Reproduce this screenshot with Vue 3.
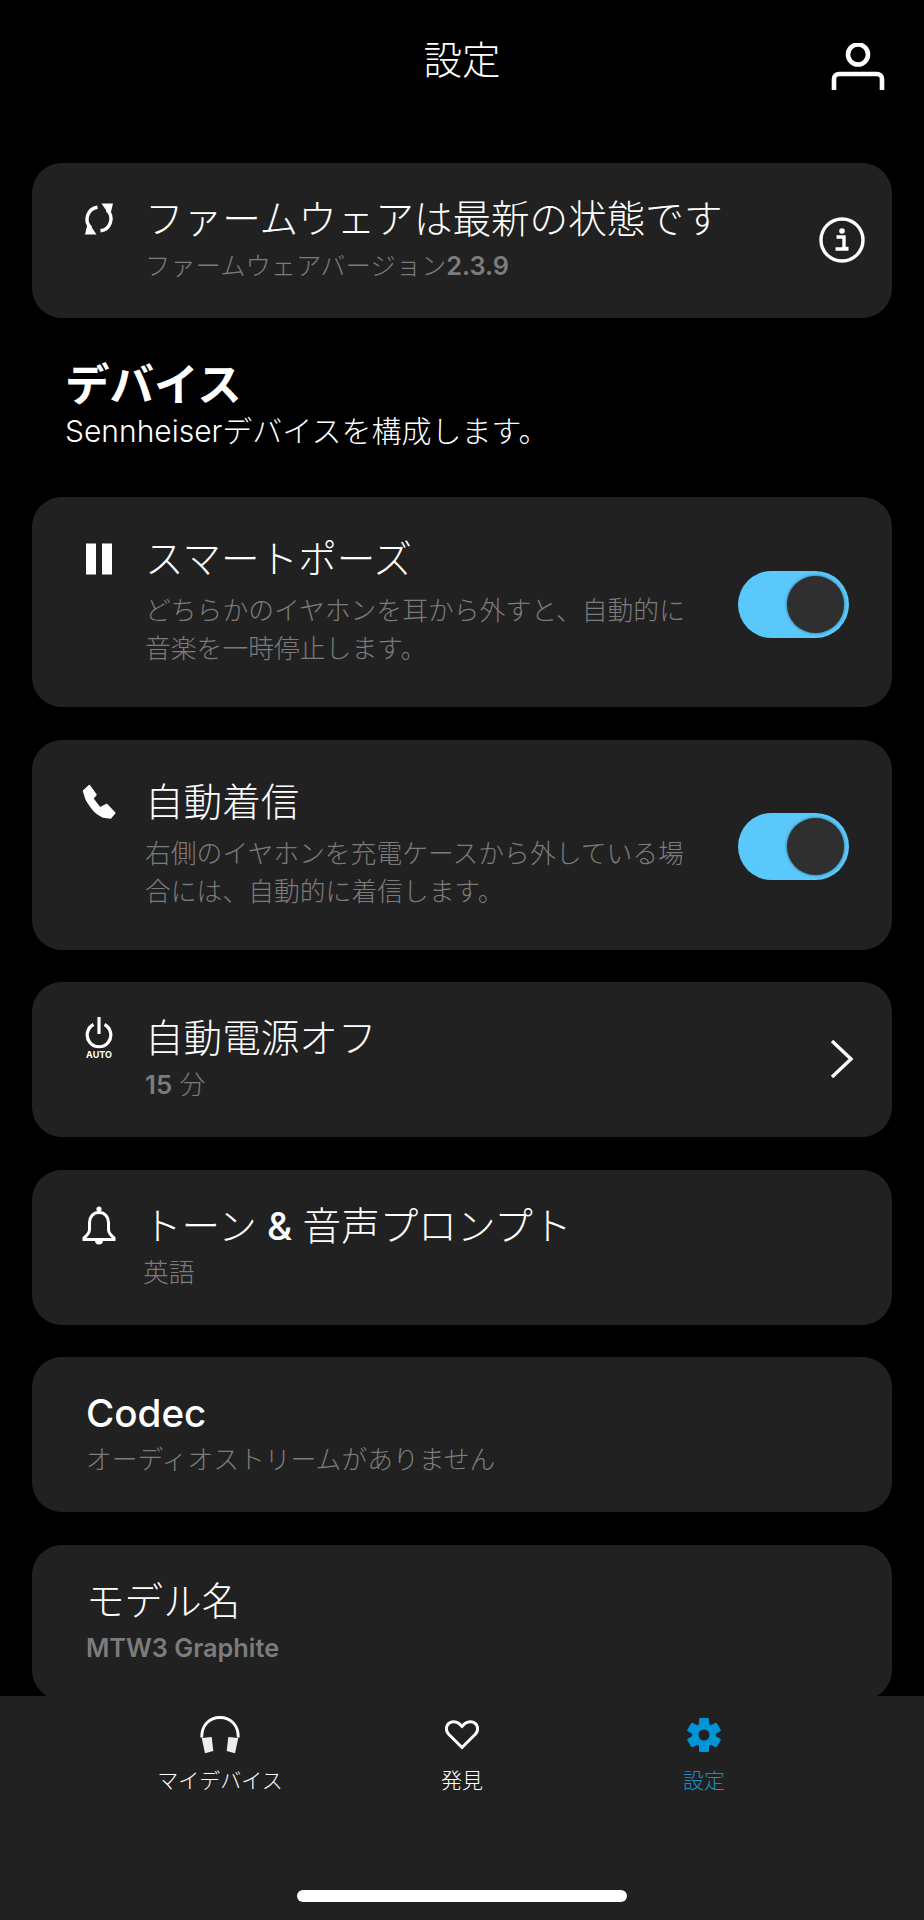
<script setup>
import { ref } from 'vue'

const smartPause = ref(true)
const autoAnswer = ref(true)

const tabs = [
  { id: 'devices', label: 'マイデバイス' },
  { id: 'discover', label: '発見' },
  { id: 'settings', label: '設定' }
]
const activeTab = ref('settings')
</script>

<template>
  <div class="app">
    <main class="content">
      <header class="topbar">
        <span></span>
        <h1 class="topbar__title">設定</h1>
        <button class="topbar__user" aria-label="アカウント">
          <svg width="54" height="48" viewBox="0 0 54 48" fill="none" stroke="#fff" stroke-width="4.6">
            <circle cx="27" cy="11.500" r="10" />
            <path d="M3 47V36a5 5 0 0 1 5-5h38a5 5 0 0 1 5 5v11" />
          </svg>
        </button>
      </header>

      <section class="card">
        <div class="card__icon">
          <svg width="32" height="32" viewBox="0 0 32 32" fill="none" stroke="#fff" stroke-width="3.400">
            <path d="M14.500 4.200A12 12 0 0 0 8 25" />
            <path d="M17.500 27.800A12 12 0 0 0 24 7" />
            <path d="M2 31.500h11.500L5 19Z" fill="#fff" stroke="none" />
            <path d="M30 .5H18.500L27 13Z" fill="#fff" stroke="none" />
          </svg>
        </div>
        <div class="card__body">
          <div class="card__title">ファームウェアは最新の状態です</div>
          <div class="card__sub card__sub--small">ファームウェアバージョン<b>2.3.9</b></div>
        </div>
        <svg class="info" width="46" height="46" viewBox="0 0 46 46" fill="none">
          <circle cx="23" cy="23" r="21" stroke="#fff" stroke-width="3.400" />
          <circle cx="23" cy="14" r="2.800" fill="#fff" />
          <path d="M17.500 20h7.500v11.500h4.500M16.500 32h13" stroke="#fff" stroke-width="3.400" />
        </svg>
      </section>

      <div class="section">
        <h2 class="section__title">デバイス</h2>
        <p class="section__sub">Sennheiserデバイスを構成します。</p>
      </div>

      <section class="card card--tall">
        <div class="card__icon">
          <svg width="26" height="32" viewBox="0 0 26 32" fill="#fff">
            <rect x="0" y="0.500" width="10" height="31" />
            <rect x="16" y="0.500" width="10" height="31" />
          </svg>
        </div>
        <div class="card__body">
          <div class="card__title">スマートポーズ</div>
          <div class="card__desc">どちらかのイヤホンを耳から外すと、自動的に音楽を一時停止します。</div>
        </div>
        <button class="toggle" :class="{ on: smartPause }" @click="smartPause = !smartPause"><span class="toggle__knob"></span></button>
      </section>

      <section class="card card--tall">
        <div class="card__icon">
          <svg width="34" height="36" viewBox="0 0 34 36" fill="#fff" stroke="#fff" stroke-width="1.500" stroke-linejoin="round">
            <path d="M1.500 7 7.300 1.500 14 10.700 10.700 14.500 18 24 24.800 20.500 32.800 29 28.500 34 21.300 33C17 31 13.500 28.500 11.300 25.700 8 21.500 5.500 18.500 4 14.700Z" />
          </svg>
        </div>
        <div class="card__body">
          <div class="card__title">自動着信</div>
          <div class="card__desc">右側のイヤホンを充電ケースから外している場合には、自動的に着信します。</div>
        </div>
        <button class="toggle" :class="{ on: autoAnswer }" @click="autoAnswer = !autoAnswer"><span class="toggle__knob"></span></button>
      </section>

      <section class="card">
        <div class="card__icon card__icon--stack">
          <svg width="28" height="32" viewBox="0 0 28 32" fill="none" stroke="#fff" stroke-width="3.200">
            <path d="M14 0v17" />
            <path d="M8.500 7.500a11.800 11.800 0 1 0 11 0" />
          </svg>
          <span class="auto">AUTO</span>
        </div>
        <div class="card__body">
          <div class="card__title">自動電源オフ</div>
          <div class="card__sub"><b>15</b> 分</div>
        </div>
        <svg class="chevron" width="24" height="38" viewBox="0 0 24 38" fill="none" stroke="#fff" stroke-width="3.400">
          <path d="M2 1l19 18L2 37" />
        </svg>
      </section>

      <section class="card">
        <div class="card__icon">
          <svg width="34" height="40" viewBox="0 0 34 40" fill="none" stroke="#fff" stroke-width="3">
            <circle cx="17" cy="3" r="2.600" fill="#fff" stroke="none" />
            <path d="M17 6.500c-6 0-9.500 4.500-9.500 10v7c0 3.500-2.500 6-5.500 8.500v1.500h30V32c-3-2.500-5.500-5-5.500-8.500v-7c0-5.500-3.500-10-9.500-10Z" />
            <path d="M13 34.500a4 4 0 0 0 8 0Z" fill="#fff" stroke="none" />
          </svg>
        </div>
        <div class="card__body">
          <div class="card__title card__title--tone">トーン<b> &amp; </b>音声プロンプト</div>
          <div class="card__sub card__sub--tone">英語</div>
        </div>
      </section>

      <section class="card card--plain">
        <div class="card__body">
          <div class="card__title card__title--latin">Codec</div>
          <div class="card__sub">オーディオストリームがありません</div>
        </div>
      </section>

      <section class="card card--plain">
        <div class="card__body">
          <div class="card__title">モデル名</div>
          <div class="card__sub card__sub--small"><b>MTW3 Graphite</b></div>
        </div>
      </section>
    </main>

    <nav class="tabbar">
      <div class="tabbar__tabs">
        <button v-for="t in tabs" :key="t.id" class="tab" :class="{ active: activeTab === t.id }" @click="activeTab = t.id">
          <svg v-if="t.id === 'devices'" width="40" height="38" viewBox="0 0 40 38" fill="none" stroke="#fff" stroke-width="2.800">
            <path d="M1.700 21.500C1.700 9 9.500 1.500 20 1.500S38.300 9 38.300 21.500" />
            <path d="M1.700 22l10-1 1.600 14-8.300 2.300Z" fill="#eee" stroke="none" />
            <path d="M38.300 22l-10-1-1.600 14 8.300 2.300Z" fill="#eee" stroke="none" />
          </svg>
          <svg v-else-if="t.id === 'discover'" width="34" height="30" viewBox="0 0 34 30" fill="none" stroke="#fff" stroke-width="3">
            <path d="M17 27.500 3.700 14.200C.5 10.800.7 6 3.700 3.500 6.700 1 11.500 1.200 14.200 3.700L17 6.500l2.800-2.800C22.500 1.200 27.300 1 30.300 3.500c3 2.500 3.200 7.300 0 10.700Z" />
          </svg>
          <svg v-else width="34" height="34" viewBox="0 0 34 34" fill="#0095d9">
            <rect x="12" y="0" width="10" height="34" rx="1.500" />
            <rect x="12" y="0" width="10" height="34" rx="1.500" transform="rotate(60 17 17)" />
            <rect x="12" y="0" width="10" height="34" rx="1.500" transform="rotate(120 17 17)" />
            <circle cx="17" cy="17" r="12" />
            <circle cx="17" cy="17" r="5.500" fill="#212121" />
          </svg>
          <span class="tab__label">{{ t.label }}</span>
        </button>
      </div>
      <div class="homebar"></div>
    </nav>
  </div>
</template>

<style>
html, body { margin: 0; background: #000; }
</style>

<style scoped>
.app {
  width: 924px;
  height: 1920px;
  display: flex;
  flex-direction: column;
  background: #000;
  color: #fff;
  font-family: "Inter", "Noto Sans CJK JP", sans-serif;
  font-weight: 300;
  overflow: hidden;
}
button { font: inherit; color: inherit; background: none; border: 0; padding: 0; cursor: pointer; }

.content {
  flex: 1;
  min-height: 0;
  overflow: hidden;
  display: flex;
  flex-direction: column;
  gap: 32.500px;
  padding: 0 32px;
}
.content > * { flex: none; }

.topbar {
  display: grid;
  grid-template-columns: 1fr auto 1fr;
  align-items: center;
  height: 120px;
  margin-bottom: 10.500px;
}
.topbar__title { margin: 0; font-size: 38.500px; font-weight: 300; line-height: 120px; }
.topbar__user { justify-self: end; height: 48px; margin: 13px 7px 0 0; }

.card {
  display: flex;
  align-items: flex-start;
  background: #212121;
  border-radius: 30px;
  padding: 32px 0 33px 50px;
}
.card--tall { padding-top: 38px; padding-bottom: 39px; }
.card--plain { padding-left: 54px; }
.card__icon {
  flex: none;
  width: 34px;
  height: 48px;
  margin-right: 29px;
  display: flex;
  align-items: center;
  justify-content: center;
}
.card__icon--stack { flex-direction: column; }
.auto { font-size: 9px; line-height: 10px; font-weight: 700; margin-top: 1px; }
.card__body { flex: 1; min-width: 0; }
.card__title { font-size: 38.600px; line-height: 48px; }
.card__title--latin { font-weight: 500; }
.card__title--tone { margin-left: -2px; }
.card__sub { margin-top: 4px; font-size: 25.800px; line-height: 38px; color: #7c7c7c; }
.card__sub--small { font-size: 25.300px; }
.card__sub--tone { margin-left: -2px; }
.card__sub b { font-weight: 600; }
.card__title b { font-weight: 500; }
.card__desc { margin-top: 9px; font-size: 25.800px; line-height: 38px; color: #7c7c7c; width: 555px; }

.info { flex: none; align-self: center; margin-right: 27px; }
.chevron { flex: none; align-self: center; margin-right: 38px; }

.toggle {
  flex: none;
  align-self: center;
  margin: 5px 43px 0 36px;
  width: 111px;
  height: 67px;
  border-radius: 34px;
  background: #5ac8fa;
  display: flex;
  align-items: center;
  justify-content: flex-end;
  padding-right: 5px;
  box-sizing: border-box;
}
.toggle__knob {
  width: 57px;
  height: 57px;
  border-radius: 50%;
  background: #2f2f2f;
  box-shadow: 0 0 3px rgba(0, 0, 0, .6);
}

.section { margin: 8px 0 13.500px; padding-left: 33px; }
.section__title { margin: 0; font-size: 44.500px; line-height: 52px; font-weight: 700; }
.section__sub { margin: .5px 0 0; font-size: 30px; line-height: 40px; }

.tabbar {
  flex: none;
  height: 224px;
  background: #212121;
  display: flex;
  flex-direction: column;
  align-items: center;
}
.tabbar__tabs { display: flex; justify-content: center; }
.tab {
  width: 242px;
  height: 102px;
  padding-top: 20px;
  display: flex;
  flex-direction: column;
  align-items: center;
  box-sizing: border-box;
}
.tab svg { height: 38px; }
.tab__label { margin-top: 13px; font-size: 21px; line-height: 28px; }
.tab.active .tab__label { color: #1a8dc8; }
.homebar {
  width: 330px;
  height: 12px;
  margin-top: 92px;
  border-radius: 6px;
  background: #fff;
}
</style>
